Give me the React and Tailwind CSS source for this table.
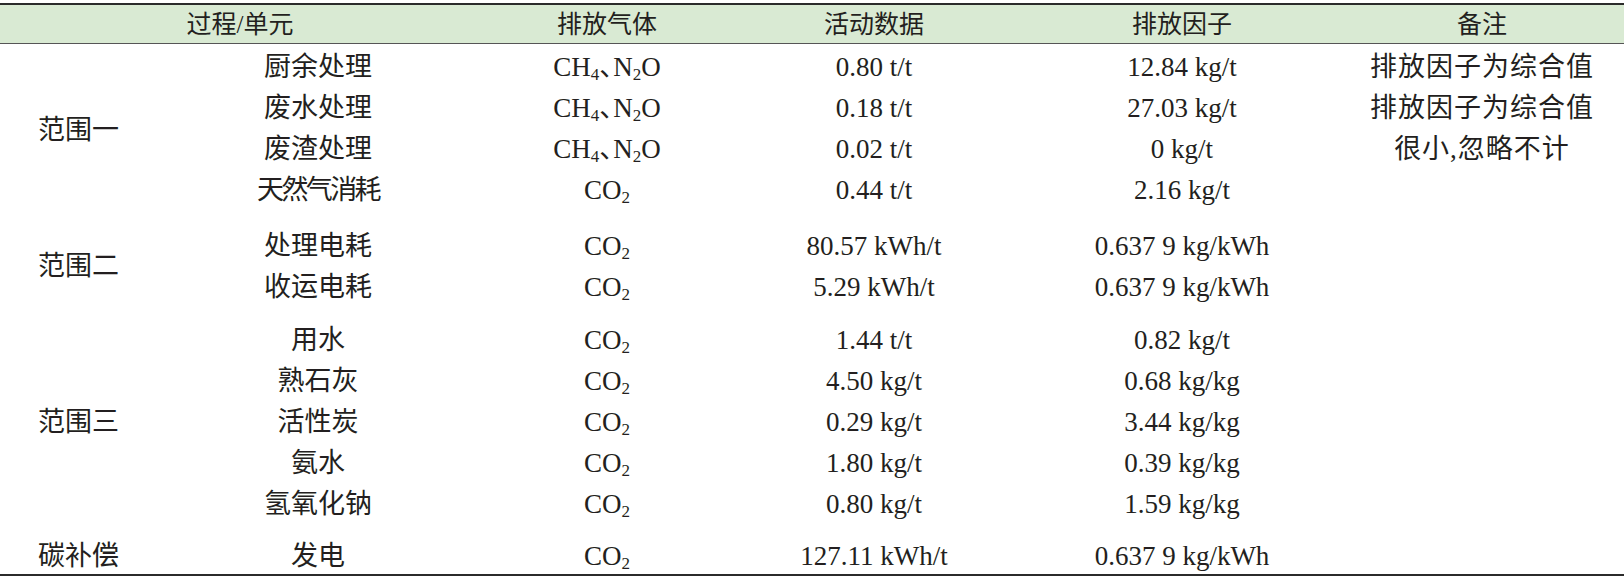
const CH4N2O = (
  <span>
    CH<sub className="text-[17px]">4</sub>
    <span className="tracking-[-13px]">、</span>N<sub className="text-[17px]">2</sub>O
  </span>
);

const CO2 = (
  <span>
    CO<sub className="text-[17px]">2</sub>
  </span>
);

// gap = space above a group, labelPad = nudge for the rowspan label
const groups = [
  {
    name: "范围一",
    gap: "",
    labelPad: "pt-[8px]",
    rows: [
      ["厨余处理", CH4N2O, "0.80 t/t", "12.84 kg/t", "排放因子为综合值"],
      ["废水处理", CH4N2O, "0.18 t/t", "27.03 kg/t", "排放因子为综合值"],
      ["废渣处理", CH4N2O, "0.02 t/t", "0 kg/t", "很小,忽略不计"],
      ["天然气消耗", CO2, "0.44 t/t", "2.16 kg/t", "", true],
    ],
  },
  {
    name: "范围二",
    gap: "pt-[15px]",
    labelPad: "pt-[19px]",
    rows: [
      ["处理电耗", CO2, "80.57 kWh/t", "0.637 9 kg/kWh", ""],
      ["收运电耗", CO2, "5.29 kWh/t", "0.637 9 kg/kWh", ""],
    ],
  },
  {
    name: "范围三",
    gap: "pt-[12px]",
    labelPad: "pt-[18px]",
    rows: [
      ["用水", CO2, "1.44 t/t", "0.82 kg/t", ""],
      ["熟石灰", CO2, "4.50 kg/t", "0.68 kg/kg", ""],
      ["活性炭", CO2, "0.29 kg/t", "3.44 kg/kg", ""],
      ["氨水", CO2, "1.80 kg/t", "0.39 kg/kg", ""],
      ["氢氧化钠", CO2, "0.80 kg/t", "1.59 kg/kg", ""],
    ],
  },
  {
    name: "碳补偿",
    gap: "pt-[11px]",
    labelPad: "pt-[17px]",
    rows: [["发电", CO2, "127.11 kWh/t", "0.637 9 kg/kWh", ""]],
  },
];

function Row({ row, first, gap }) {
  const [unit, gas, activity, factor, note, tight] = row;
  const cell = "h-[41px] pt-[6px] flex items-center justify-center whitespace-nowrap";
  return (
    <div
      className={`grid grid-cols-[276px_302px_232px_384px_216px] text-center ${
        first ? gap : ""
      }`}
    >
      <div className={`${cell} ${tight ? "tracking-[-2.6px]" : ""}`}>{unit}</div>
      <div className={cell}>{gas}</div>
      <div className={cell}>{activity}</div>
      <div className={cell}>{factor}</div>
      <div className={`${cell} tracking-[1px]`}>{note}</div>
    </div>
  );
}

export default function App() {
  return (
    <div
      className="w-[1624px] h-[581px] bg-white pt-[3px] text-[#231f20] text-[27px] leading-none"
      style={{ fontFamily: '"Liberation Serif", "Noto Sans CJK SC", serif' }}
    >
      <div className="border-t-2 border-b-2 border-[#2b2b2b]">
        <div className="grid grid-cols-[456px_302px_232px_384px_216px] h-[39px] items-center text-center bg-[#d9ead3] border-b border-[#555555] text-[25px]">
          <div className="pl-[24px]">过程/单元</div>
          <div>排放气体</div>
          <div>活动数据</div>
          <div>排放因子</div>
          <div>备注</div>
        </div>

        {groups.map((group) => (
          <div key={group.name} className="flex">
            <div className={`w-[180px] shrink-0 flex items-center pl-[38px] ${group.labelPad}`}>
              {group.name}
            </div>
            <div className="flex flex-col">
              {group.rows.map((row, i) => (
                <Row key={i} row={row} first={i === 0} gap={group.gap} />
              ))}
            </div>
          </div>
        ))}
      </div>
    </div>
  );
}
